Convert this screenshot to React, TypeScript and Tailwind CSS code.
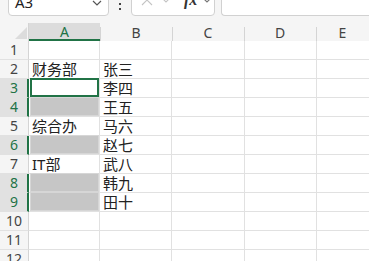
import React from "react";

type Cell = { text?: string; kind?: "active" | "blank" };

const GREEN = "#217346";

const rows: { a: Cell; b?: string }[] = [
  { a: {} },
  { a: { text: "财务部" }, b: "张三" },
  { a: { kind: "active" }, b: "李四" },
  { a: { kind: "blank" }, b: "王五" },
  { a: { text: "综合办" }, b: "马六" },
  { a: { kind: "blank" }, b: "赵七" },
  { a: { text: "IT部" }, b: "武八" },
  { a: { kind: "blank" }, b: "韩九" },
  { a: { kind: "blank" }, b: "田十" },
  { a: {} },
  { a: {} },
  { a: {} },
];

const cols = ["A", "B", "C", "D", "E"];

function Chevron({ className }: { className?: string }) {
  return (
    <svg width="10" height="6" viewBox="0 0 10 6" className={className}>
      <path d="M1 1l4 4 4-4" fill="none" stroke="currentColor" strokeWidth="1.2" />
    </svg>
  );
}

function Toolbar() {
  return (
    <div className="flex h-[23px] items-start bg-[#f5f5f5]">
      <div className="ml-[8px] -mt-[11px] flex h-[27px] w-[101px] items-center justify-between rounded-[4px] border border-[#d1d1d1] bg-white pl-[6px] pr-[6px]">
        <span className="text-[15px] text-[#222]">A3</span>
        <Chevron className="text-[#555]" />
      </div>
      <div className="flex w-[22px] flex-col items-center gap-[3px] pt-[3px]">
        <span className="h-[2px] w-[2px] bg-[#444]" />
        <span className="h-[2px] w-[2px] bg-[#444]" />
      </div>
      <div className="-mt-[11px] flex h-[27px] w-[84px] items-center rounded-[4px] border border-[#d1d1d1] bg-white pl-[9px]">
        <svg width="12" height="12" viewBox="0 0 12 12" className="mt-[-6px] text-[#c4c4c4]">
          <path d="M1 1l10 10M11 1L1 11" stroke="currentColor" strokeWidth="1.1" />
        </svg>
        <svg width="14" height="10" viewBox="0 0 14 10" className="ml-[7px] mt-[-8px] text-[#c4c4c4]">
          <path d="M1 3l5 5 7-7" fill="none" stroke="currentColor" strokeWidth="1.1" />
        </svg>
        <span
          className="ml-[10px] mt-[-6px] text-[16px] font-bold italic leading-none text-[#333]"
          style={{ fontFamily: '"Liberation Serif", serif' }}
        >
          fx
        </span>
        <Chevron className="ml-[5px] mt-[-6px] text-[#777]" />
      </div>
      <div className="ml-[6px] -mt-[11px] h-[27px] flex-1 rounded-l-[4px] border border-r-0 border-[#d1d1d1] bg-white" />
    </div>
  );
}

function HeaderRow() {
  return (
    <div className="flex h-[18px] bg-[#f5f5f5]">
      <div className="relative w-[29px] shrink-0 border-r border-[#d4d4d4]">
        <svg width="12" height="12" viewBox="0 0 12 12" className="absolute left-[15px] top-[4px]">
          <path d="M12 0V12H0Z" fill="#dcdcdc" />
        </svg>
      </div>
      {cols.map((c, i) => (
        <div
          key={c}
          className={
            i === 0
              ? "flex w-[71px] shrink-0 items-center justify-center border-b-2 border-[#217346] bg-[#dcdcdc] text-[14px] leading-none text-[#217346]"
              : "relative flex w-[72px] shrink-0 items-center justify-center text-[14px] leading-none text-[#444] " +
                (i === 4 ? "flex-1" : "")
          }
        >
          {i > 0 && <span className="absolute left-0 top-[4px] h-[14px] w-px bg-[#d4d4d4]" />}
          <span className="pt-[1px]">{c}</span>
        </div>
      ))}
    </div>
  );
}

function GridRow({ n, a, b }: { n: number; a: Cell; b?: string }) {
  const sel = a.kind === "active" || a.kind === "blank";
  return (
    <div className="flex h-[19px]">
      <div
        className={
          "flex w-[29px] shrink-0 items-end justify-center border-b border-[#e1e1e1] pb-[1px] text-[14px] leading-[16px] " +
          (sel
            ? "border-r-2 border-r-[#217346] bg-[#e1e1e1] text-[#217346]"
            : "border-r border-r-[#d4d4d4] bg-[#f5f5f5] text-[#444]")
        }
      >
        <span className={sel ? "pl-[1px]" : ""}>{n}</span>
      </div>
      <div className="flex w-[71px] shrink-0 items-end border-b border-r border-[#e1e1e1] text-[15px] leading-[17px] text-[#222]">
        {a.kind === "active" && (
          <div className="ml-[1px] h-[19px] w-[70px] border-2 border-[#217346] bg-white" />
        )}
        {a.kind === "blank" && (
          <div className="ml-[1px] h-[19px] w-[70px] border border-[#d6d6d6] bg-[#c6c6c6]" />
        )}
        {!a.kind && <span className="pl-[3px]">{a.text}</span>}
      </div>
      <div className="flex w-[72px] shrink-0 items-end border-b border-r border-[#e1e1e1] text-[15px] leading-[17px] text-[#222]">
        <span className="pl-[3px]">{b}</span>
      </div>
      <div className="w-[73px] shrink-0 border-b border-r border-[#e1e1e1]" />
      <div className="w-[72px] shrink-0 border-b border-r border-[#e1e1e1]" />
      <div className="flex-1 border-b border-[#e1e1e1]" />
    </div>
  );
}

export default function App() {
  return (
    <div
      className="h-[261px] w-[369px] overflow-hidden bg-white"
      style={{ fontFamily: '"Noto Sans", "Noto Sans CJK SC", sans-serif' }}
    >
      <Toolbar />
      <HeaderRow />
      {rows.map((r, i) => (
        <GridRow key={i} n={i + 1} a={r.a} b={r.b} />
      ))}
    </div>
  );
}
